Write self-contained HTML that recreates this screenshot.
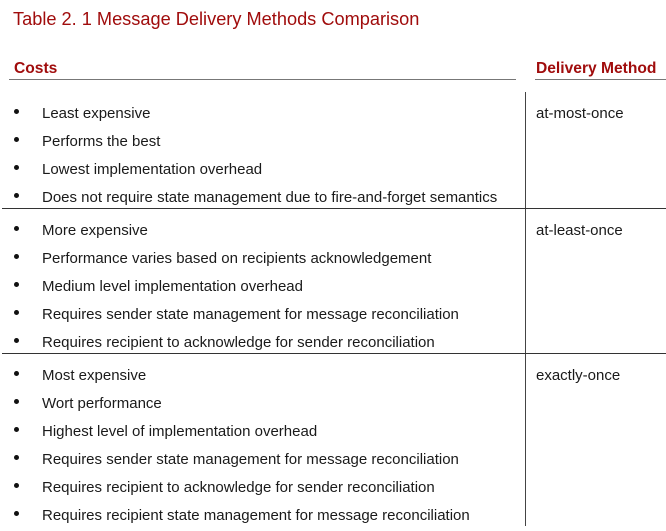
<!DOCTYPE html>
<html><head><style>
body{margin:0;width:666px;height:531px;background:#fff;position:relative;font-family:"Liberation Sans",Arial,sans-serif;overflow:hidden}
.a{position:absolute;white-space:nowrap}
.t{left:13px;top:9px;font-size:18.2px;color:#a00c0c}
.h{top:60px;font-size:15.6px;font-weight:bold;color:#a00c0c}
.r{font-size:15px;color:#1a1a1a;line-height:18px}
.b{position:absolute;width:5px;height:5px;border-radius:50%;background:#111}
.l{position:absolute;background:#444}
</style></head><body>
<div class="a t">Table 2. 1 Message Delivery Methods Comparison</div>
<div class="a h" style="left:14px">Costs</div>
<div class="a h" style="left:536px">Delivery Method</div>
<div class="l" style="left:9px;top:79px;width:507px;height:1px;background:#777"></div>
<div class="l" style="left:535px;top:79px;width:131px;height:1px;background:#777"></div>
<div class="l" style="left:525px;top:92px;width:1px;height:434px"></div>
<div class="l" style="left:2px;top:208px;width:664px;height:1px;background:#333"></div>
<div class="l" style="left:2px;top:353px;width:664px;height:1px;background:#333"></div>
<div id="rows"></div>
<script>
var d=[[112,"Least expensive","at-most-once"],[140,"Performs the best"],[168,"Lowest implementation overhead"],[196,"Does not require state management due to fire-and-forget semantics"],
[229,"More expensive","at-least-once"],[257,"Performance varies based on recipients acknowledgement"],[285,"Medium level implementation overhead"],[313,"Requires sender state management for message reconciliation"],[341,"Requires recipient to acknowledge for sender reconciliation"],
[374,"Most expensive","exactly-once"],[402,"Wort performance"],[430,"Highest level of implementation overhead"],[458,"Requires sender state management for message reconciliation"],[486,"Requires recipient to acknowledge for sender reconciliation"],[514,"Requires recipient state management for message reconciliation"]];
var h="";d.forEach(function(x){h+='<div class="b" style="left:14px;top:'+(x[0]-3)+'px"></div><div class="a r" style="left:42px;top:'+(x[0]-7)+'px">'+x[1]+'</div>';if(x[2])h+='<div class="a r" style="left:536px;top:'+(x[0]-7)+'px">'+x[2]+'</div>';});
document.getElementById("rows").innerHTML=h;
</script>
</body></html>
